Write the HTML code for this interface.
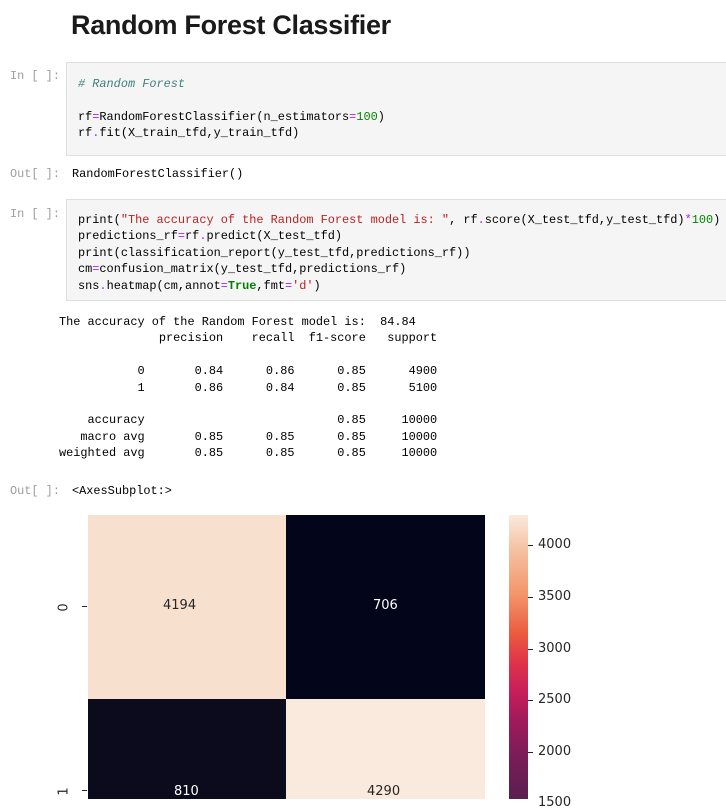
<!DOCTYPE html>
<html><head><meta charset="utf-8"><style>
body{margin:0;width:726px;height:799px;overflow:hidden;background:#fff;position:relative;font-family:"Liberation Sans",sans-serif}
.a{position:absolute;white-space:pre}
.m{font-family:"Liberation Mono",monospace;font-size:11.9px;line-height:16.4px;color:#000}
.p{color:#9e9e9e;font-family:"Liberation Mono",monospace;font-size:11.9px}
.box{position:absolute;left:66px;width:680px;background:#f5f5f5;border:1px solid #dedede}
.c{color:#408080;font-style:italic}.g{color:#008000;font-weight:bold}.n{color:#080}.o{color:#aa22ff}.s{color:#ba2121}
.t{position:absolute;font-size:13px;color:#262626;font-family:"DejaVu Sans",sans-serif}
</style></head><body>
<div class="a" style="left:71px;top:10px;font-size:27px;letter-spacing:-0.3px;font-weight:bold;color:#1a1a1a">Random Forest Classifier</div>
<div class="a p" style="left:10px;top:69px">In [ ]:</div>
<div class="box" style="top:62px;height:92px"></div>
<div class="a m" style="left:78px;top:76px"><span class="c"># Random Forest</span>

rf<span class="o">=</span>RandomForestClassifier(n_estimators<span class="o">=</span><span class="n">100</span>)
rf<span class="o">.</span>fit(X_train_tfd,y_train_tfd)</div>
<div class="a p" style="left:10px;top:167px">Out[ ]:</div>
<div class="a m" style="left:72px;top:166px">RandomForestClassifier()</div>
<div class="a p" style="left:10px;top:207px">In [ ]:</div>
<div class="box" style="top:199px;height:100px"></div>
<div class="a m" style="left:78px;top:212px">print(<span class="s">"The accuracy of the Random Forest model is: "</span>, rf<span class="o">.</span>score(X_test_tfd,y_test_tfd)<span class="o">*</span><span class="n">100</span>)
predictions_rf<span class="o">=</span>rf<span class="o">.</span>predict(X_test_tfd)
print(classification_report(y_test_tfd,predictions_rf))
cm<span class="o">=</span>confusion_matrix(y_test_tfd,predictions_rf)
sns<span class="o">.</span>heatmap(cm,annot<span class="o">=</span><span class="g">True</span>,fmt<span class="o">=</span><span class="s">'d'</span>)</div>
<div class="a m" style="left:59px;top:314px">The accuracy of the Random Forest model is:  84.84
              precision    recall  f1-score   support

           0       0.84      0.86      0.85      4900
           1       0.86      0.84      0.85      5100

    accuracy                           0.85     10000
   macro avg       0.85      0.85      0.85     10000
weighted avg       0.85      0.85      0.85     10000</div>
<div class="a p" style="left:10px;top:484px">Out[ ]:</div>
<div class="a m" style="left:72px;top:483px">&lt;AxesSubplot:&gt;</div>
<div style="position:absolute;left:88px;top:515px;width:198px;height:184px;background:#f8e0cf"></div>
<div style="position:absolute;left:286px;top:515px;width:199px;height:184px;background:#03051a"></div>
<div style="position:absolute;left:88px;top:699px;width:198px;height:100px;background:#0c0b1e"></div>
<div style="position:absolute;left:286px;top:699px;width:199px;height:100px;background:#faeadd"></div>
<div class="t" style="left:163px;top:598px">4194</div>
<div class="t" style="left:373px;top:598px;color:#fff">706</div>
<div class="t" style="left:174px;top:784px;color:#fff">810</div>
<div class="t" style="left:367px;top:784px">4290</div>
<div style="position:absolute;left:82px;top:606px;width:5px;height:1px;background:#262626"></div>
<div style="position:absolute;left:82px;top:790px;width:5px;height:1px;background:#262626"></div>
<div class="t" style="left:60px;top:600px;transform:rotate(-90deg)">0</div>
<div class="t" style="left:60px;top:784px;transform:rotate(-90deg)">1</div>
<div style="position:absolute;left:509px;top:515px;width:19px;height:284px;background:linear-gradient(#faeadd 0%,#f5c2a3 12%,#f3956a 28%,#ea5a3f 42%,#e0334a 52%,#c81e5a 62%,#a11a5b 72%,#7d1d58 84%,#5a1e4f 100%)"></div>
<div style="position:absolute;left:528px;top:545px;width:5px;height:1px;background:#262626"></div>
<div style="position:absolute;left:528px;top:597px;width:5px;height:1px;background:#262626"></div>
<div style="position:absolute;left:528px;top:649px;width:5px;height:1px;background:#262626"></div>
<div style="position:absolute;left:528px;top:700px;width:5px;height:1px;background:#262626"></div>
<div style="position:absolute;left:528px;top:752px;width:5px;height:1px;background:#262626"></div>
<div class="t" style="left:538px;top:537px">4000</div>
<div class="t" style="left:538px;top:589px">3500</div>
<div class="t" style="left:538px;top:641px">3000</div>
<div class="t" style="left:538px;top:692px">2500</div>
<div class="t" style="left:538px;top:744px">2000</div>
<div class="t" style="left:538px;top:795px">1500</div>
</body></html>
